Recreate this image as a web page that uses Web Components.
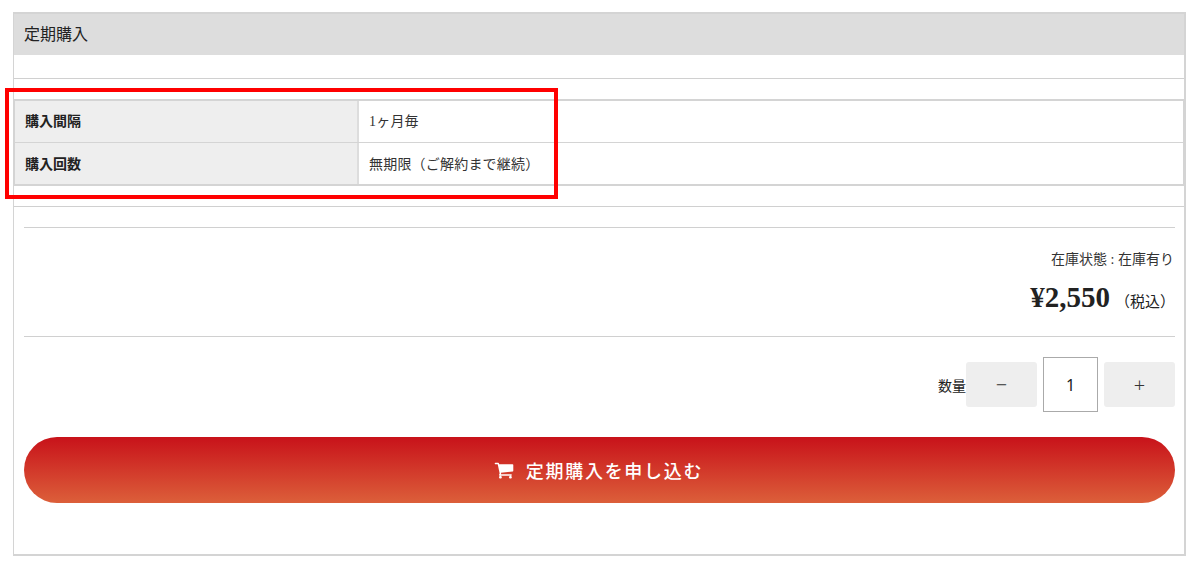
<!DOCTYPE html>
<html lang="ja">
<head>
<meta charset="utf-8">
<title>定期購入</title>
<style>
  html, body { margin: 0; background: #fff; }
  body {
    padding: 12px 0 18px 13px;
    color: #222;
    font-family: "Liberation Serif", "Noto Sans CJK JP", serif;
    font-size: 14px;
  }
</style>
</head>
<body>
<purchase-panel heading="定期購入">
  <marked-area>
    <spec-table>
      <spec-row label="購入間隔">1ヶ月毎</spec-row>
      <spec-row label="購入回数">無期限（ご解約まで継続）</spec-row>
    </spec-table>
  </marked-area>
  <price-block stock="在庫状態 : 在庫有り" price="¥2,550" tax="（税込）"></price-block>
  <qty-stepper label="数量" value="1"></qty-stepper>
  <cart-button>定期購入を申し込む</cart-button>
</purchase-panel>

<script>
customElements.define('purchase-panel',
  class extends HTMLElement {
    constructor() {
      super()
      const shadow = this.attachShadow({ mode: 'open' })
      shadow.innerHTML = `
        <style>
          :host {
            display: block;
            width: 1170px;
            height: 540px;
            border: 2px solid #d4d4d4;
            border-left-width: 1px;
            background: #fff;
          }
          h2 {
            margin: 0;
            height: 41px;
            line-height: 41px;
            padding-left: 10px;
            background: #ddd;
            font-size: 16px;
            font-weight: 400;
          }
          .gap { height: 23px; border-bottom: 1px solid #d0d0d0; }
        </style>
        <h2></h2>
        <div class="gap"></div>
        <slot></slot>
      `
      shadow.querySelector('h2').textContent = this.getAttribute('heading')
    }
  }
)

// the table sits between two rules, the red frame lies over it
customElements.define('marked-area',
  class extends HTMLElement {
    constructor() {
      super()
      const shadow = this.attachShadow({ mode: 'open' })
      shadow.innerHTML = `
        <style>
          :host { display: block; position: relative; padding: 20px 0; border-bottom: 1px solid #d0d0d0; }
          .frame {
            position: absolute;
            left: -9px;
            top: 9px;
            width: 545px;
            height: 103px;
            border: 4px solid #f00;
          }
        </style>
        <slot></slot>
        <div class="frame"></div>
      `
    }
  }
)

customElements.define('spec-table',
  class extends HTMLElement {
    constructor() {
      super()
      const shadow = this.attachShadow({ mode: 'open' })
      shadow.innerHTML = `
        <style>
          :host { display: block; border: 1px solid #d4d4d4; border-top-width: 2px; border-bottom: 0; }
        </style>
        <slot></slot>
      `
    }
  }
)

customElements.define('spec-row',
  class extends HTMLElement {
    constructor() {
      super()
      const shadow = this.attachShadow({ mode: 'open' })
      shadow.innerHTML = `
        <style>
          :host {
            display: grid;
            grid-template-columns: 344px 1fr;
            box-sizing: border-box;
            height: 42px;
            border-bottom: 1px solid #d4d4d4;
          }
          :host(:last-child) { height: 43px; border-bottom-width: 2px; }
          div { display: flex; align-items: center; padding-bottom: 3px; }
          :host(:last-child) div { padding-bottom: 2px; }
          .label { padding-left: 10px; background: #eee; border-right: 2px solid #ddd; font-weight: 700; }
          .value { padding-left: 10px; color: #333; letter-spacing: .2px; }
        </style>
        <div class="label"></div>
        <div class="value"><slot></slot></div>
      `
      shadow.querySelector('.label').textContent = this.getAttribute('label')
    }
  }
)

customElements.define('price-block',
  class extends HTMLElement {
    constructor() {
      super()
      const shadow = this.attachShadow({ mode: 'open' })
      shadow.innerHTML = `
        <style>
          :host {
            display: block;
            box-sizing: border-box;
            height: 110px;
            margin: 20px 9px 0 10px;
            border-top: 1px solid #d0d0d0;
            border-bottom: 1px solid #d0d0d0;
            text-align: right;
          }
          .stock { margin-top: 21px; line-height: 22px; font-size: 14px; color: #333; padding-right: 1px; }
          .price { margin-top: 8px; line-height: 36px; font-size: 29px; font-weight: 700; color: #222; }
          .num { margin-right: 5px; }
          .tax { font-size: 15px; font-weight: 400; }
        </style>
        <div class="stock"></div>
        <div class="price"><span class="num"></span><span class="tax"></span></div>
      `
      shadow.querySelector('.stock').textContent = this.getAttribute('stock')
      shadow.querySelector('.num').textContent = this.getAttribute('price')
      shadow.querySelector('.tax').textContent = this.getAttribute('tax')
    }
  }
)

customElements.define('qty-stepper',
  class extends HTMLElement {
    constructor() {
      super()
      const shadow = this.attachShadow({ mode: 'open' })
      shadow.innerHTML = `
        <style>
          :host {
            display: flex;
            justify-content: flex-end;
            align-items: center;
            height: 55px;
            margin: 20px 9px 0 0;
            font-family: "Noto Sans", "Noto Sans CJK JP", sans-serif;
          }
          .label { font-family: "Liberation Serif", "Noto Sans CJK JP", serif; font-size: 14px; }
          .btn {
            width: 71px;
            height: 45px;
            display: flex;
            align-items: center;
            justify-content: center;
            background: #eee;
            border-radius: 3px;
            font-size: 20px;
            font-weight: 300;
            color: #333;
          }
          .val {
            box-sizing: border-box;
            width: 55px;
            height: 55px;
            margin: 0 6px;
            display: flex;
            align-items: center;
            justify-content: center;
            border: 1px solid #aaa;
            font-size: 16px;
            color: #222;
          }
        </style>
        <span class="label"></span>
        <span class="btn">−</span>
        <span class="val"></span>
        <span class="btn">+</span>
      `
      shadow.querySelector('.label').textContent = this.getAttribute('label')
      shadow.querySelector('.val').textContent = this.getAttribute('value')
    }
  }
)

customElements.define('cart-button',
  class extends HTMLElement {
    constructor() {
      super()
      const shadow = this.attachShadow({ mode: 'open' })
      shadow.innerHTML = `
        <style>
          :host {
            display: flex;
            align-items: center;
            justify-content: center;
            gap: 12px;
            height: 66px;
            margin: 25px 9px 0 10px;
            padding-right: 2px;
            box-sizing: border-box;
            border-radius: 33px;
            background: linear-gradient(#c8121a, #dc5f3a);
            color: #fff;
            font-family: "Noto Sans CJK JP", sans-serif;
            font-size: 18px;
            font-weight: 500;
            letter-spacing: 1.7px;
          }
          svg { width: 20px; height: 20px; fill: #fff; }
        </style>
        <svg viewBox="0 0 1792 1792"><path d="M704 1536q0 52-38 90t-90 38-90-38-38-90 38-90 90-38 90 38 38 90zm896 0q0 52-38 90t-90 38-90-38-38-90 38-90 90-38 90 38 38 90zm128-1088v512q0 24-16.5 42.5t-40.5 21.5l-1044 122q13 60 13 70 0 16-24 64h920q26 0 45 19t19 45-19 45-45 19h-1024q-26 0-45-19t-19-45q0-11 8-31.5t16-36 21.5-40 15.5-29.5l-177-823h-204q-26 0-45-19t-19-45 19-45 45-19h256q16 0 28.5 6.5t19.5 15.5 13 24.5 8 26 5.5 29.5 4.5 26h1201q26 0 45 19t19 45z"/></svg>
        <span><slot></slot></span>
      `
    }
  }
)
</script>
</body>
</html>
